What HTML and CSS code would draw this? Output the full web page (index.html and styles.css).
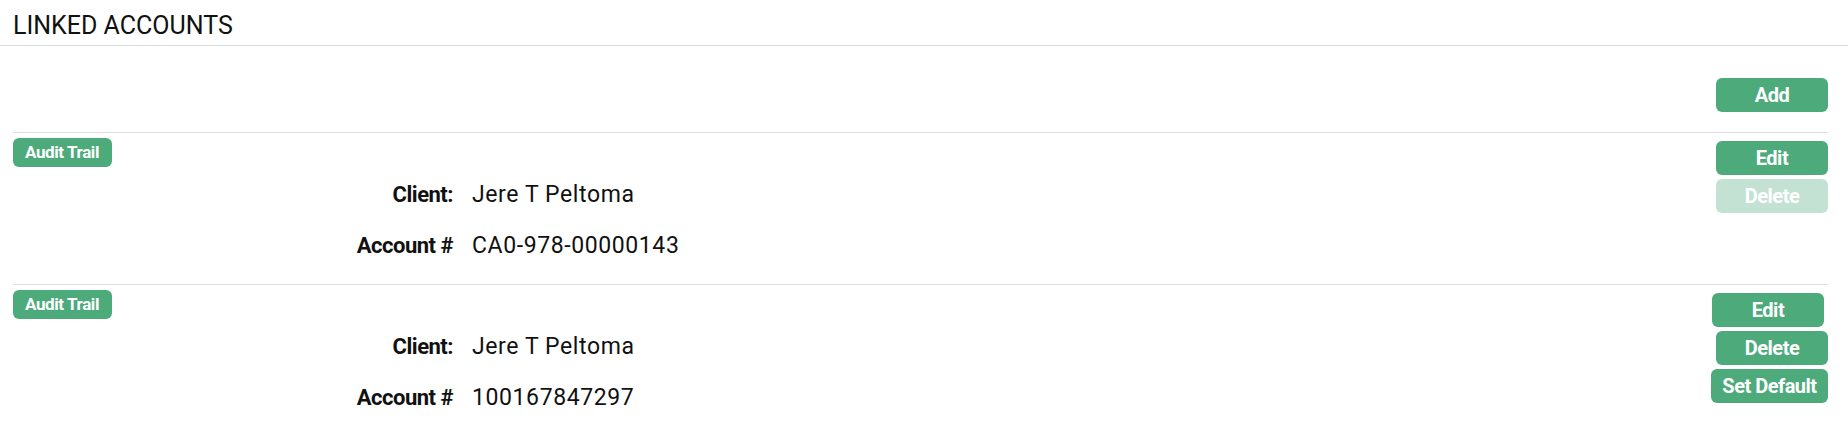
FILE: index.html
```html
<!DOCTYPE html>
<html>
<head>
<meta charset="utf-8">
<link rel="stylesheet" href="styles.css">
</head>
<body>
<div class="header"><h1 class="title">LINKED ACCOUNTS</h1></div>
<div class="content">
  <div class="toolbar"><button class="btn">Add</button></div>
  <div class="row">
    <div class="main">
      <span class="badge">Audit Trail</span>
      <div class="fields">
        <div class="label">Client:</div><div class="value">Jere T Peltoma</div>
        <div class="label">Account #</div><div class="value">CA0-978-00000143</div>
      </div>
    </div>
    <div class="actions">
      <button class="btn">Edit</button>
      <button class="btn disabled">Delete</button>
    </div>
  </div>
  <div class="row">
    <div class="main">
      <span class="badge">Audit Trail</span>
      <div class="fields">
        <div class="label">Client:</div><div class="value">Jere T Peltoma</div>
        <div class="label">Account #</div><div class="value">100167847297</div>
      </div>
    </div>
    <div class="actions">
      <button class="btn shift">Edit</button>
      <button class="btn">Delete</button>
      <button class="btn wide">Set Default</button>
    </div>
  </div>
</div>
</body>
</html>
```
FILE: styles.css
```css
* { box-sizing: border-box; }
body {
  margin: 0;
  font-family: Roboto, "Liberation Sans", sans-serif;
  color: #111;
  background: #fff;
}
.header {
  padding: 12px 13px 5px;
  border-bottom: 1px solid #dedede;
}
.title {
  margin: 0;
  font-size: 25px;
  line-height: 28px;
  font-weight: 400;
  letter-spacing: 0;
}
.content {
  padding: 0 20px 0 13px;
}
.toolbar {
  display: flex;
  justify-content: flex-end;
  padding: 32px 0 20px;
}
.btn {
  display: block;
  width: 112px;
  height: 34px;
  padding: 0 2px;
  border: none;
  border-radius: 6px;
  background: #4caa7b;
  color: #fff;
  font-family: Roboto, "Liberation Sans", sans-serif;
  font-weight: 700;
  font-size: 20px;
  letter-spacing: -0.5px;
}
.btn.disabled { background: #c4e2d4; }
.btn.wide { width: 117px; }
.btn.shift { margin-right: 4px; }
.row {
  display: flex;
  justify-content: space-between;
  border-top: 1px solid #dedede;
  padding: 5px 0 13px;
}
.badge {
  display: inline-block;
  height: 29px;
  line-height: 29px;
  padding: 0 13px 0 12px;
  border-radius: 6px;
  background: #4caa7b;
  color: #fff;
  font-weight: 700;
  font-size: 17px;
  letter-spacing: -0.4px;
}
.fields {
  margin-top: 2px;
  display: grid;
  grid-template-columns: 440px auto;
  column-gap: 19px;
  font-size: 22px;
  line-height: 51px;
}
.label {
  text-align: right;
  font-weight: 700;
  letter-spacing: -0.5px;
}
.value { font-size: 23px; letter-spacing: 0.6px; }
.actions {
  display: flex;
  flex-direction: column;
  align-items: flex-end;
  gap: 4px;
  padding-top: 3px;
}
```
